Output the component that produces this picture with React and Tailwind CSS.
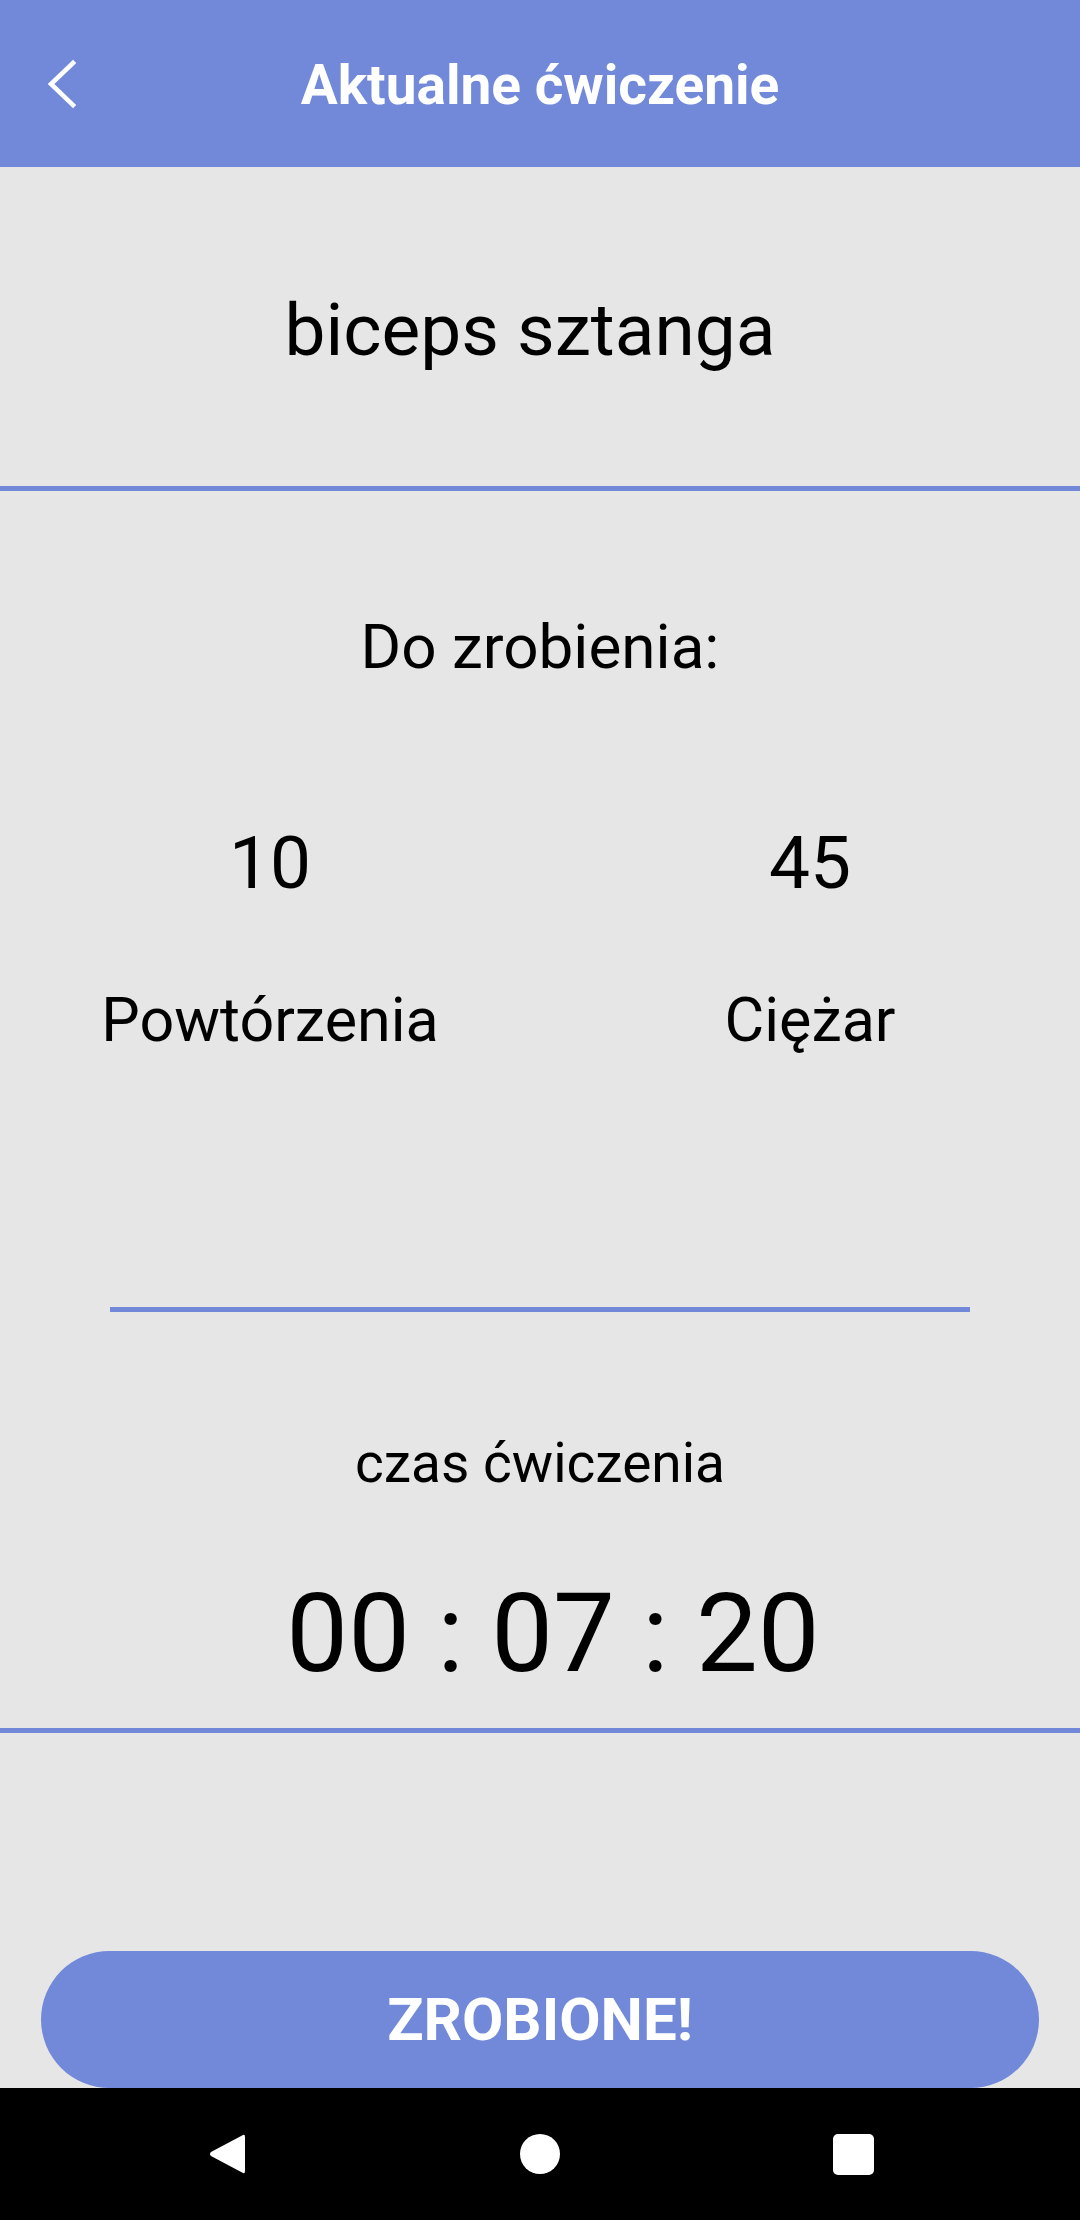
export default function App() {
  return (
    <div className="flex h-[2220px] w-[1080px] flex-col bg-[#e6e6e6] font-['Roboto',sans-serif] text-black">
      {/* toolbar */}
      <div className="grid h-[167px] shrink-0 grid-cols-[1fr_auto_1fr] items-center bg-[#7289da] pt-[3px]">
        <div className="pl-[45px]">
          <svg width="36" height="52" viewBox="0 0 36 52" fill="none">
            <path d="M28 4 L6 25 L28 46" stroke="white" strokeWidth="4.5" strokeLinecap="square" />
          </svg>
        </div>
        <div className="text-[55px] font-bold leading-none text-white">Aktualne ćwiczenie</div>
        <div />
      </div>

      {/* exercise name */}
      <div className="pt-[127px] pb-[119px] pr-[20px] text-center text-[73px] leading-none">
        biceps sztanga
      </div>
      <div className="h-[5px] bg-[#7289da]" />

      {/* to do */}
      <div className="pt-[125px] text-center text-[62px] leading-none">Do zrobienia:</div>
      <div className="grid grid-cols-2 pt-[149px] text-center">
        <div className="flex flex-col items-center">
          <div className="text-[73px] leading-none">10</div>
          <div className="pt-[90px] text-[61px] leading-none">Powtórzenia</div>
        </div>
        <div className="flex flex-col items-center">
          <div className="text-[73px] leading-none">45</div>
          <div className="pt-[90px] text-[61px] leading-none">Ciężar</div>
        </div>
      </div>

      <div className="mx-[110px] mt-[256px] h-[5px] bg-[#7289da]" />

      {/* timer */}
      <div className="pt-[124px] text-center text-[55px] leading-none">czas ćwiczenia</div>
      <div className="pt-[88px] pl-[26px] text-center text-[110px] leading-none">00 : 07 : 20</div>
      <div className="mt-[39px] h-[5px] bg-[#7289da]" />

      <div className="flex-1" />

      {/* button */}
      <div className="px-[41px]">
        <button className="flex h-[137px] w-full items-center justify-center rounded-full bg-[#7289da] text-[60px] font-bold leading-none text-white">
          ZROBIONE!
        </button>
      </div>

      {/* android nav bar */}
      <div className="grid h-[132px] shrink-0 grid-cols-3 items-center bg-black px-[70px]">
        <div className="flex justify-center">
          <svg width="38" height="44" viewBox="0 0 38 44">
            <path d="M35 3 Q37 2 37 5 L37 39 Q37 42 35 41 L3 24 Q1 22 3 20 Z" fill="white" />
          </svg>
        </div>
        <div className="flex justify-center">
          <div className="h-[40px] w-[40px] rounded-full bg-white" />
        </div>
        <div className="flex justify-center">
          <div className="h-[41px] w-[41px] rounded-[5px] bg-white" />
        </div>
      </div>
    </div>
  )
}
